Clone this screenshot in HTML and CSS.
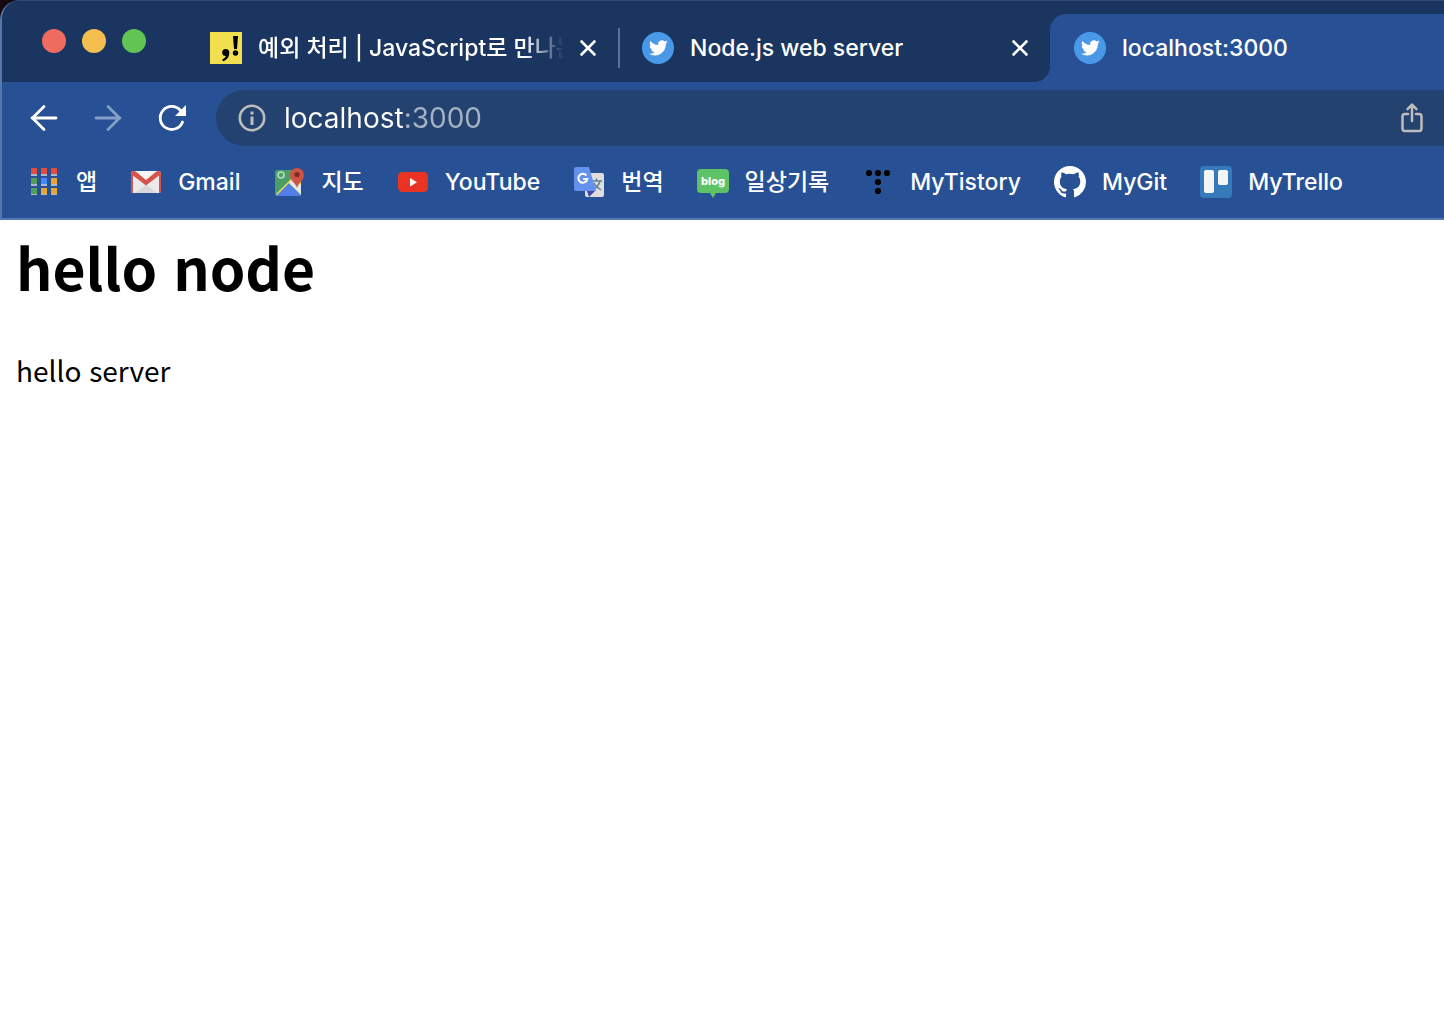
FILE: index.html
```html
<!DOCTYPE html>
<html lang="ko">
<head>
<meta charset="utf-8">
<meta name="viewport" content="width=device-width, initial-scale=1">
<title>localhost:3000</title>
<link rel="stylesheet" href="styles.css">
</head>
<body>
<svg class="defs" aria-hidden="true">
  <symbol id="bird" viewBox="0 0 32 32">
    <circle cx="16" cy="16" r="16" fill="#4a99e9"/>
    <path transform="translate(7 6.500) scale(.78)" fill="#fff" d="M23.953 4.570a10 10 0 0 1-2.825.775 4.958 4.958 0 0 0 2.163-2.723c-.951.555-2.005.959-3.127 1.184a4.920 4.920 0 0 0-8.384 4.482C7.690 8.095 4.067 6.130 1.640 3.162a4.822 4.822 0 0 0-.666 2.475c0 1.710.870 3.213 2.188 4.096a4.904 4.904 0 0 1-2.228-.616v.060a4.923 4.923 0 0 0 3.946 4.827 4.996 4.996 0 0 1-2.212.085 4.936 4.936 0 0 0 4.604 3.417 9.867 9.867 0 0 1-6.102 2.105c-.390 0-.779-.023-1.170-.067a13.995 13.995 0 0 0 7.557 2.209c9.053 0 13.998-7.496 13.998-13.985 0-.210 0-.420-.015-.630A9.935 9.935 0 0 0 24 4.590z"/>
  </symbol>
  <symbol id="cross" viewBox="0 0 16 16"><path d="M1.500 1.500l13 13M14.500 1.500l-13 13" stroke="#fff" stroke-width="2.600" stroke-linecap="round"/></symbol>
</svg>
<div class="window">
  <header class="chrome">
    <div class="tabstrip">
      <div class="lights">
        <button class="light red" aria-label="닫기"></button>
        <button class="light yellow" aria-label="최소화"></button>
        <button class="light green" aria-label="확대"></button>
      </div>
      <div class="tab faded">
        <svg class="icon" viewBox="0 0 32 32"><path fill="#f1df4f" d="M0 0h32v32H0z"/><path d="M23 4h5l-1 13h-3z"/><circle cx="25.500" cy="21" r="2.700"/><circle cx="15.700" cy="20.500" r="3.500"/><path d="M19.200 20.500c.3 4.300-2.200 7.500-6.200 8.700l-.8-1.800c2.500-1 3.800-2.500 3.800-4.700z"/></svg>
        <span class="title">예외 처리 | JavaScript로 만나는</span>
        <button class="close" aria-label="탭 닫기"><svg class="cross"><use href="#cross"/></svg></button>
      </div>
      <div class="tab divided">
        <svg class="icon"><use href="#bird"/></svg>
        <span class="title">Node.js web server</span>
        <button class="close" aria-label="탭 닫기"><svg class="cross"><use href="#cross"/></svg></button>
      </div>
      <div class="tab active">
        <svg class="icon"><use href="#bird"/></svg>
        <span class="title">localhost:3000</span>
      </div>
    </div>
    <div class="toolbar">
      <div class="nav">
        <button class="tool" aria-label="뒤로"><svg class="icon" viewBox="0 0 32 32"><path d="M28 16H4M16 4.500L4.500 16 16 27.500" fill="none" stroke="#fff" stroke-width="2.800" stroke-linecap="round"/></svg></button>
        <button class="tool" aria-label="앞으로"><svg class="icon" viewBox="0 0 32 32"><path d="M4 16h24M16 4.500L27.500 16 16 27.500" fill="none" stroke="#849fc8" stroke-width="2.800" stroke-linecap="round"/></svg></button>
        <button class="tool" aria-label="새로고침"><svg class="icon" viewBox="0 0 32 32"><path d="M26.500 20A11.500 11.500 0 1 1 24.500 8.500" fill="none" stroke="#fff" stroke-width="2.800" stroke-linecap="round"/><path d="M30 3v11H19z" fill="#fff"/></svg></button>
      </div>
      <div class="address">
        <svg class="info" viewBox="0 0 28 28"><circle cx="14" cy="14" r="12.200" fill="none" stroke="#bdbdbd" stroke-width="2.600"/><path d="M12.500 7.500h3v3h-3zM12.500 12.500h3v8.500h-3z" fill="#bdbdbd"/></svg>
        <input class="url" type="text" aria-label="주소" value="localhost:3000">
        <button class="share" aria-label="공유"><svg class="icon" viewBox="0 0 32 32"><g fill="none" stroke="#bdbdbd" stroke-width="2.500" stroke-linecap="round" stroke-linejoin="round"><path d="M12 12H9a2.500 2.500 0 0 0-2.500 2.500v12A2.500 2.500 0 0 0 9 29h14a2.500 2.500 0 0 0 2.500-2.500v-12A2.500 2.500 0 0 0 23 12h-3M16 19V3M11.500 7.200L16 2.700l4.500 4.500"/></g></svg></button>
      </div>
    </div>
    <nav class="bookmarks">
      <a class="bookmark" href="#apps"><svg class="icon" viewBox="0 0 32 32"><path fill="#a6b8d2" d="M3 8h6v2H3zM13 8h6v2h-6zM23 8h6v2h-6zM3 18h6v2H3zM13 18h6v2h-6zM23 18h6v2h-6zM3 28h6v1H3zM13 28h6v1h-6zM23 28h6v1h-6z"/><path fill="#e34b3d" d="M3 2h6v6H3zM13 2h6v6h-6zM23 2h6v6h-6z"/><path fill="#539e5a" d="M3 12h6v6H3zM3 22h6v6H3z"/><path fill="#4688f4" d="M13 12h6v6h-6z"/><path fill="#e8a536" d="M23 12h6v6h-6zM13 22h6v6h-6zM23 22h6v6h-6z"/></svg>앱</a>
      <a class="bookmark" href="#gmail"><svg class="icon" viewBox="0 0 32 32"><rect x="1" y="5" width="30" height="22" rx="2.500" fill="#eaeaea"/><path d="M5 27l11-8 11 8z" fill="#d8d8d8"/><path d="M4 5h24L16 16z" fill="#f7f7f7"/><path d="M1 8v17a2 2 0 0 0 2 2V9.500l13 10 13-10V27a2 2 0 0 0 2-2V8c0-3-2.500-4-5-2.200L16 14 6 5.800C3.500 4 1 5 1 8z" fill="#d5534a"/></svg>Gmail</a>
      <a class="bookmark" href="#maps"><svg class="icon" viewBox="0 0 32 32"><rect x="2" y="4" width="26" height="26" rx="2" fill="#4b9f66"/><path d="M3 29L15 17 28 30H4z" fill="#527fe8"/><path d="M3 28L22 9l6 6v13L16 17 4 29z" fill="#f1d75a"/><path d="M16 17l5-5 7 7v10z" fill="#e4e7ec"/><circle cx="8" cy="9" r="3" fill="none" stroke="#b8dfc2" stroke-width="1.600"/><path d="M24 22c-1-5-7-7-7-13a7 7 0 0 1 14 0c0 6-6 8-7 13z" fill="#ce5345"/><circle cx="24" cy="8.500" r="2.600" fill="#782d29"/></svg>지도</a>
      <a class="bookmark" href="#youtube"><svg class="icon" viewBox="0 0 32 32"><rect x="1" y="6" width="30" height="20" rx="4.500" fill="#e93323"/><path d="M13 12v8.500l7-4.200z" fill="#fff"/></svg>YouTube</a>
      <a class="bookmark" href="#translate"><svg class="icon" viewBox="0 0 32 32"><rect x="12" y="7" width="19" height="24" rx="2" fill="#dedede"/><path d="M14 25h8l-6 6z" fill="#3d46a8"/><path d="M19 15h10M23.500 12.500V15M27 15c-1 4-4 7-7 9M21 17c1 3 4 5 7 7" fill="none" stroke="#65808c" stroke-width="1.500"/><path d="M3 1h13l7 24H3a2 2 0 0 1-2-2V3a2 2 0 0 1 2-2z" fill="#6490ee"/><path d="M13.500 9.500A4.500 4.500 0 1 0 14.300 13H10" fill="none" stroke="#fff" stroke-width="2"/></svg>번역</a>
      <a class="bookmark" href="#blog"><svg class="icon" viewBox="0 0 32 32"><path d="M4 3h24a4 4 0 0 1 4 4v16a4 4 0 0 1-4 4h-9l-3 5-3-5H4a4 4 0 0 1-4-4V7a4 4 0 0 1 4-4z" fill="#5dc366"/><text class="blog" x="16" y="19" text-anchor="middle">blog</text></svg>일상기록</a>
      <a class="bookmark" href="#tistory"><svg class="icon" viewBox="0 0 32 32"><circle cx="7" cy="7" r="3.100"/><circle cx="16" cy="7" r="3.100"/><circle cx="25" cy="7" r="3.100"/><circle cx="16" cy="16" r="3.100"/><circle cx="16" cy="25" r="3.100"/></svg>MyTistory</a>
      <a class="bookmark" href="#git"><svg class="icon" viewBox="0 0 16 16"><path fill="#fff" d="M8 0C3.580 0 0 3.580 0 8c0 3.540 2.290 6.530 5.470 7.590.4.070.55-.17.55-.38 0-.19-.01-.82-.01-1.490-2.010.37-2.530-.49-2.690-.94-.09-.23-.48-.94-.82-1.130-.28-.15-.68-.52-.01-.53.63-.01 1.080.58 1.230.82.72 1.210 1.870.87 2.330.66.070-.52.28-.87.51-1.070-1.780-.2-3.640-.89-3.640-3.950 0-.87.31-1.590.82-2.150-.08-.2-.36-1.020.08-2.120 0 0 .67-.21 2.200.82.64-.18 1.320-.27 2-.27s1.360.09 2 .27c1.530-1.040 2.200-.82 2.200-.82.44 1.100.16 1.920.08 2.120.51.56.82 1.270.82 2.150 0 3.070-1.870 3.750-3.650 3.950.29.25.54.73.54 1.480 0 1.070-.01 1.930-.01 2.200 0 .21.15.46.55.38A8.010 8.010 0 0 0 16 8c0-4.420-3.580-8-8-8z"/></svg>MyGit</a>
      <a class="bookmark" href="#trello"><svg class="icon" viewBox="0 0 32 32"><rect width="32" height="32" rx="4" fill="#357abb"/><rect x="4" y="4" width="10" height="23" rx="2" fill="#f5f5f5"/><rect x="18" y="4" width="10" height="15" rx="2" fill="#f5f5f5"/></svg>MyTrello</a>
    </nav>
  </header>
  <main class="page">
    <h1 class="heading">hello node</h1>
    <p class="message">hello server</p>
  </main>
</div>
</body>
</html>
```
FILE: styles.css
```css
* { box-sizing: border-box; }

body {
  margin: 0;
  background: #fff;
  font-family: Inter, "Noto Sans CJK KR", sans-serif;
}

button {
  padding: 0;
  border: 0;
  background: none;
  display: flex;
}

.defs { display: none; }

.window {
  min-height: 100vh;
  overflow: hidden;
  background: linear-gradient(#150910, #150910) top left / 24px 24px no-repeat;
}

.chrome {
  overflow: hidden;
  color: #fff;
  background: #275194;
  border-left: 2px solid #5577aa;
  border-bottom: 2px solid #5279b3;
  border-top-left-radius: 20px;
}

.icon {
  width: 32px;
  height: 32px;
  flex: none;
}

.tabstrip {
  display: flex;
  height: 82px;
  padding-top: 14px;
  background: #1a355f;
  box-shadow: inset 0 1px #344c71;
}

.lights {
  display: flex;
  flex: none;
  width: 184px;
  gap: 16px;
  padding: 15px 0 0 40px;
}

.light {
  width: 24px;
  height: 24px;
  border-radius: 50%;
}

.red { background: #ed6b5f; }
.yellow { background: #f5bf4f; }
.green { background: #61c554; }

.tab {
  display: flex;
  align-items: center;
  flex: none;
  width: 432px;
  gap: 16px;
  padding: 0 22px 0 24px;
  font-size: 23px;
  line-height: 32px;
  font-weight: 500;
}

.divided {
  background: linear-gradient(#5f7391, #5f7391) left center / 2px 40px no-repeat;
}

.active {
  flex: 1;
  background: #275194;
  border-top-left-radius: 16px;
  position: relative;
}

.active::before {
  content: "";
  position: absolute;
  left: -16px;
  bottom: 0;
  width: 16px;
  height: 16px;
  background: radial-gradient(circle at 0 0, transparent 16px, #275194 16px);
}

.title {
  flex: 1;
  min-width: 0;
  white-space: nowrap;
}

.faded .title {
  mask-image: linear-gradient(to right, #000 calc(100% - 40px), transparent);
}

.close { flex: none; }

.cross {
  width: 16px;
  height: 16px;
}

.toolbar {
  display: flex;
  padding-top: 8px;
}

.nav {
  display: flex;
  align-items: center;
  flex: none;
  width: 214px;
  gap: 32px;
  padding-left: 26px;
}

.address {
  display: flex;
  align-items: center;
  flex: 1;
  height: 56px;
  padding: 0 16px 0 22px;
  gap: 18px;
  background: #24426f;
  border-radius: 28px 0 0 28px;
}

.info {
  width: 28px;
  height: 28px;
  flex: none;
}

.url {
  flex: 1;
  min-width: 0;
  padding: 0;
  border: 0;
  outline: 0;
  font: 400 28px/40px Inter, sans-serif;
  color: transparent;
  background: linear-gradient(to right, #fff 121px, #a7b3c5 121px) text;
}

.bookmarks {
  display: flex;
  height: 72px;
  gap: 33px;
  padding-left: 26px;
}

.bookmark {
  display: flex;
  align-items: center;
  flex: none;
  gap: 16px;
  color: #fff;
  font-size: 23px;
  line-height: 32px;
  font-weight: 500;
  text-decoration: none;
}

.blog {
  fill: #fff;
  font: 800 11px Inter, sans-serif;
}

.page {
  padding: 14px 16px;
  color: #000;
  font-family: "Noto Sans CJK KR", sans-serif;
}

.heading {
  margin: 0 0 56px;
  font-size: 57px;
  line-height: 64px;
  font-weight: 700;
}

.message {
  margin: 0;
  font-size: 28px;
  line-height: 32px;
}
```
